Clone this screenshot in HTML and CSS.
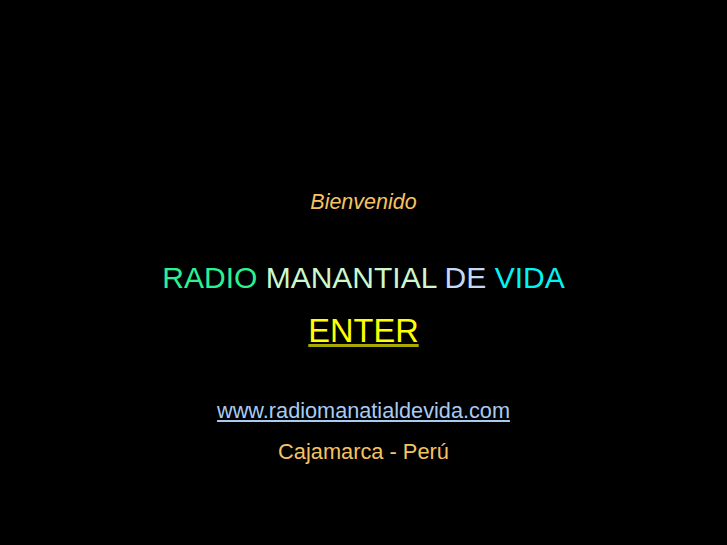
FILE: index.html
```html
<!DOCTYPE html>
<html>
<head>
<meta charset="utf-8">
<title>Radio Manantial de Vida</title>
<link rel="stylesheet" href="styles.css">
</head>
<body>
<main class="page">
  <p class="welcome">Bienvenido</p>
  <h1 class="title"><span class="t-radio">RADIO</span> <span class="t-manantial">MANANTIAL</span> <span class="t-de">DE</span> <span class="t-vida">VIDA</span></h1>
  <p class="enter"><a href="#" class="enter-link"><span class="enter-text">ENTER</span></a></p>
  <p class="site"><a href="#" class="site-link">www.radiomanatialdevida.com</a></p>
  <p class="place">Cajamarca - Perú</p>
</main>
</body>
</html>
```
FILE: styles.css
```css
html, body {
  margin: 0;
  padding: 0;
  background: #000;
  height: 100%;
}
body {
  font-family: "Liberation Sans", Arial, sans-serif;
}
.page {
  display: flex;
  flex-direction: column;
  align-items: center;
  padding-top: 192px;
}
.page p, .page h1 {
  margin: 0;
  line-height: 1;
  font-weight: normal;
}
.welcome {
  font-size: 21.5px;
  font-style: italic;
  color: #f6c360;
}
.title {
  font-size: 30px;
  margin-top: 49px !important;
}
.t-radio { color: #2af292; }
.t-manantial { color: #ccf8cc; }
.t-de { color: #c6d8f8; }
.t-vida { color: #00f4f4; }
.enter {
  font-size: 32.6px;
  margin-top: 22px !important;
}
.enter-link {
  color: #a8a800;
  text-decoration: underline;
}
.enter-text {
  color: #ffff00;
}
.site {
  font-size: 21.7px;
  margin-top: 53px !important;
}
.site-link {
  color: #a9cbf2;
  text-decoration: underline;
}
.place {
  font-size: 21.8px;
  color: #f6c360;
  margin-top: 19px !important;
}
```
